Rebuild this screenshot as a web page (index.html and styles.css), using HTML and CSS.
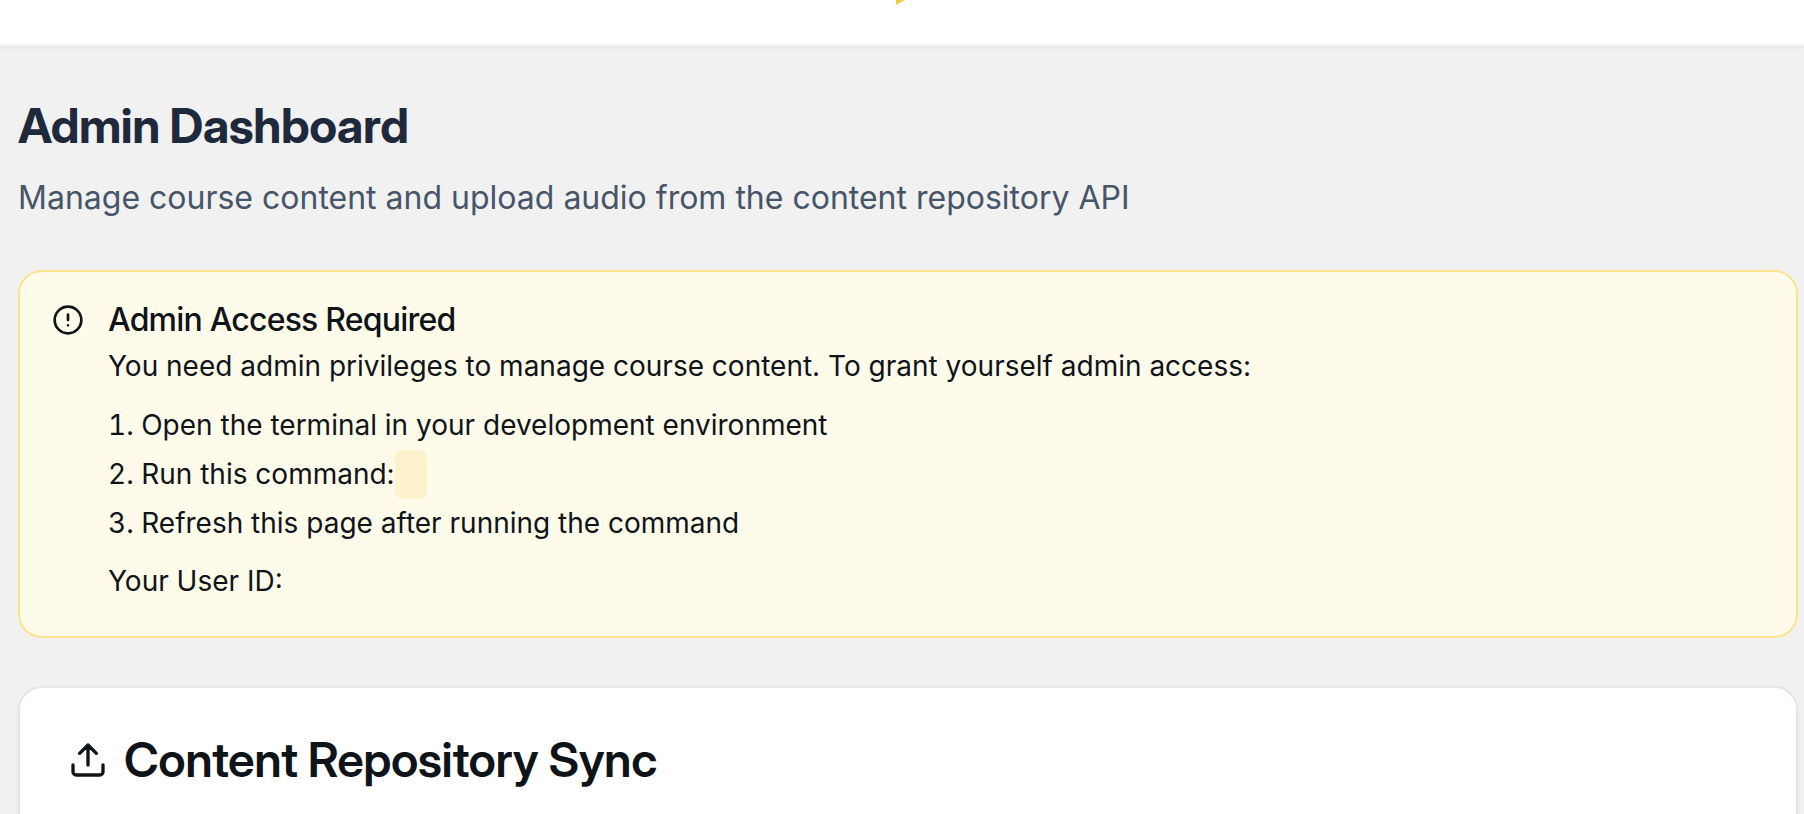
FILE: index.html
```html
<!DOCTYPE html>
<html lang="en">
<head>
<meta charset="utf-8">
<title>Admin Dashboard</title>
<link rel="stylesheet" href="styles.css">
</head>
<body>
<header class="topbar">
  <svg class="brand-mark" viewBox="0 0 12 5" aria-hidden="true"><path d="M0 0H9L0 5Z"/></svg>
</header>
<main class="page">
  <h1 class="page-title">Admin Dashboard</h1>
  <p class="page-lead">Manage course content and upload audio from the content repository API</p>
  <section class="alert" role="alert">
    <svg class="alert-icon" viewBox="0 0 24 24" aria-hidden="true"><circle cx="12" cy="12" r="10"/><path d="M12 8v4M12 16h.01"/></svg>
    <div class="alert-body">
      <h2 class="alert-title">Admin Access Required</h2>
      <p>You need admin privileges to manage course content. To grant yourself admin access:</p>
      <ol class="steps">
        <li>Open the terminal in your development environment</li>
        <li>Run this command:<code class="command"></code></li>
        <li>Refresh this page after running the command</li>
      </ol>
      <p>Your User ID:</p>
    </div>
  </section>
  <section class="card">
    <h2 class="card-title">
      <svg class="card-icon" viewBox="0 0 24 24" aria-hidden="true"><path d="M21 15v4a2 2 0 0 1-2 2H5a2 2 0 0 1-2-2v-4M17 8l-5-5-5 5M12 3v12"/></svg>
      Content Repository Sync
    </h2>
  </section>
</main>
</body>
</html>
```
FILE: styles.css
```css
* { box-sizing: border-box; }
body { margin: 0; background: #f1f1f1; color: #0f1419; font-family: Inter, sans-serif; font-size: 28px; line-height: 46px; overflow: hidden; }
h1, h2, p, ol { margin: 0; }
svg { fill: none; stroke: currentColor; stroke-width: 2; stroke-linecap: round; stroke-linejoin: round; }
.topbar { height: 46px; background: #fff; border-bottom: 2px solid #f3f4f6; box-shadow: 0 2px 4px rgba(0, 0, 0, 0.05); display: flex; justify-content: center; }
.brand-mark { width: 12px; height: 5px; fill: #f0cb46; stroke: none; }
.page { padding: 48px 6px 0 18px; }
.page-title, .card-title { font-family: "Inter Display", Inter, sans-serif; font-size: 48px; letter-spacing: -0.01em; }
.page-title { line-height: 64px; font-weight: 700; color: #1e293b; }
.page-lead { margin-top: 12px; font-size: 32px; line-height: 56px; color: #475569; }
.alert { margin-top: 44px; padding: 30px 32px 32px; display: flex; gap: 24px; border: 2px solid #fae58c; border-radius: 24px; background: #fffbeb; }
.alert-icon { width: 32px; height: 32px; margin-top: 2px; flex: none; }
.alert-title { font-size: 32px; line-height: 36px; font-weight: 500; letter-spacing: -0.025em; margin-bottom: 5px; }
.steps { margin: 12px 0 10px; padding: 0; list-style-position: inside; line-height: 49px; }
.command { display: inline-block; vertical-align: bottom; width: 32px; height: 49px; border-radius: 8px; background: #fcf2cc; }
.card { margin-top: 48px; padding: 48px 48px 80px; border: 2px solid #e1e8ed; border-radius: 24px; background: #fff; box-shadow: 0 2px 4px rgba(0, 0, 0, 0.04); }
.card-title { display: flex; align-items: center; gap: 16px; line-height: 48px; font-weight: 600; }
.card-icon { width: 40px; height: 40px; flex: none; }
```
